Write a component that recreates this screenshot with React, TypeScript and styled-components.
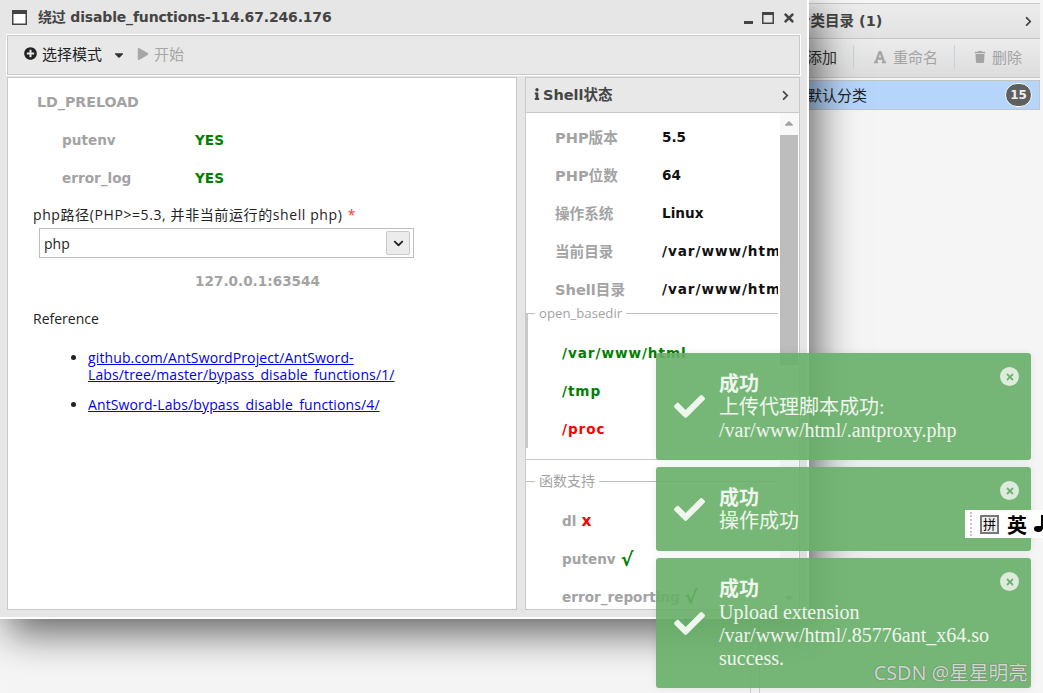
import * as React from 'react'
import styled, { createGlobalStyle } from 'styled-components'
import {
  FaCaretDown,
  FaCheck,
  FaChevronDown,
  FaChevronRight,
  FaFont,
  FaInfo,
  FaPlay,
  FaPlusCircle,
  FaTimes,
  FaTrash,
} from 'react-icons/fa'

const Global = createGlobalStyle`
  html, body { margin: 0; padding: 0; height: 100%; }
  body {
    background: #f5f5f5;
    overflow: hidden;
    font-family: "Open Sans", "Noto Sans CJK SC", sans-serif;
    font-size: 14px;
    color: #222;
  }
`

const boldFont = `"DejaVu Sans", "Noto Sans CJK SC", sans-serif`
const serifFont = `"Liberation Serif", "Noto Sans CJK SC", serif`

const Desktop = styled.div`
  position: relative;
  width: 1043px;
  height: 693px;
  overflow: hidden;
  display: flex;
  gap: 8px;
`
const BackLeft = styled.div`
  width: 750px;
  flex: none;
  border-right: 1px solid #cfcfcf;
`
const BackPanel = styled.div`
  flex: 1;
  margin-top: 3px;
  margin-right: 3px;
  border-left: 1px solid #cfcfcf;
  display: flex;
  flex-direction: column;
  font-size: 15px;
`
const BackHeader = styled.div`
  height: 36px;
  box-sizing: border-box;
  display: flex;
  align-items: center;
  justify-content: space-between;
  padding: 0 6px 0 36px;
  background: linear-gradient(#ececec, #e2e2e2);
  border-top: 1px solid #c8c8c8;
  border-bottom: 1px solid #c8c8c8;
  font: bold 14.5px ${boldFont};
  color: #444;
`
const BackHeaderText = styled.span`
  padding-bottom: 3px;
`
const BackToolbar = styled.div`
  height: 39px;
  box-sizing: border-box;
  display: flex;
  align-items: center;
  padding: 0 0 3px 28px;
  background: linear-gradient(#ececec, #dcdcdc);
  border-bottom: 1px solid #c8c8c8;
`
const BackTool = styled.div<{ $muted?: boolean }>`
  display: flex;
  align-items: center;
  gap: 6px;
  height: 24px;
  padding: 0 16px 0 19px;
  line-height: 20px;
  white-space: nowrap;
  color: ${(p) => (p.$muted ? '#a3a3a3' : '#333')};
  border-right: 1px solid #c5d3dc;
  &:first-child {
    padding-left: 0;
  }
  &:last-child {
    border-right: none;
  }
`
const CategoryRow = styled.div`
  height: 30px;
  box-sizing: border-box;
  margin-top: 2px;
  display: flex;
  align-items: center;
  justify-content: space-between;
  padding: 0 7px 0 46px;
  background: #b5d5fb;
  border: 1px solid #c4c4c4;
  color: #222;
`
const CategoryName = styled.span`
  padding-bottom: 2px;
`
const Badge = styled.span`
  width: 27px;
  height: 24px;
  box-sizing: border-box;
  border-radius: 12px;
  background: #5f5f5f;
  border: 1px solid #fff;
  color: #eee;
  font: bold 12px ${boldFont};
  display: flex;
  align-items: center;
  justify-content: center;
`

const Win = styled.div`
  position: absolute;
  left: 0;
  top: 0;
  width: 809px;
  height: 619px;
  box-sizing: border-box;
  background: #e6e6e6;
  border: solid #fff;
  border-width: 0 2px 2px 0;
  box-shadow: 8px 14px 38px rgba(0, 0, 0, 0.6);
  display: flex;
  flex-direction: column;
  padding: 0 7px 7px 7px;
`
const TitleBar = styled.div`
  height: 35px;
  flex: none;
  margin-left: -1px;
  display: flex;
  align-items: center;
  gap: 11px;
  padding: 0 4px 0 6px;
  box-sizing: border-box;
  font: bold 14px ${boldFont};
  color: #444;
`
const TitleText = styled.span`
  flex: 1;
  padding-bottom: 4px;
  letter-spacing: -0.17px;
`
const WinControls = styled.div`
  display: flex;
  align-items: center;
  gap: 8px;
  color: #444;
`
const Toolbar = styled.div`
  height: 40px;
  box-sizing: border-box;
  flex: none;
  display: flex;
  align-items: center;
  padding: 0 0 3px 16px;
  background: #e8e8e8;
  border: 1px solid #c9c9c9;
  box-shadow: 0 0 0 1px #fff;
  font-size: 15px;
`
const ToolButton = styled.div<{ $off?: boolean }>`
  display: flex;
  align-items: center;
  gap: 5px;
  color: ${(p) => (p.$off ? '#a6a6a6' : '#222')};
`
const CaretSlot = styled.div`
  display: flex;
  margin: 3px 11px 0 10px;
  color: #333;
`
const Panes = styled.div`
  flex: 1;
  min-height: 0;
  margin-top: 2px;
  display: flex;
  gap: 8px;
`
const LeftPane = styled.div`
  width: 510px;
  flex: none;
  background: #fff;
  border: 1px solid #c9c9c9;
  padding: 5px 0 0 25px;
  box-sizing: border-box;
`
const RightPane = styled.div`
  flex: 1;
  min-width: 0;
  display: flex;
  flex-direction: column;
`
const PaneHeader = styled.div`
  height: 36px;
  box-sizing: border-box;
  flex: none;
  display: flex;
  align-items: center;
  justify-content: space-between;
  padding: 0 8px 0 5px;
  background: #e8e8e8;
  border: 1px solid #c9c9c9;
  font: bold 14.5px ${boldFont};
  color: #444;
`
const PaneTitle = styled.span`
  display: flex;
  align-items: center;
  padding-bottom: 3px;
`
const PaneBody = styled.div`
  flex: 1;
  min-height: 0;
  display: flex;
  background: #fff;
  border-left: 1px solid #c9c9c9;
  border-right: 1px solid #c9c9c9;
  border-bottom: 1px solid #c9c9c9;
`
const ScrollArea = styled.div`
  flex: 1;
  min-width: 0;
  overflow: hidden;
  padding-top: 5px;
`
const ScrollBar = styled.div`
  width: 18px;
  flex: none;
  margin: 0 1px 0 2px;
  display: flex;
  flex-direction: column;
  align-items: center;
  background: #f8f8f8;
  position: relative;
  color: #a3a3a3;
`
const ScrollEnd = styled.div`
  height: 22px;
  display: flex;
  align-items: center;
  justify-content: center;
`
const ScrollEndBottom = styled(ScrollEnd)`
  position: absolute;
  bottom: 0;
  left: 0;
  right: 0;
`
const Thumb = styled.div`
  width: 100%;
  height: 230px;
  background: #bdbdbd;
`
const FormHeading = styled.div`
  height: 38px;
  display: flex;
  align-items: center;
  padding-left: 4px;
  font: bold 14.2px ${boldFont};
  color: #a3a3a3;
`
const KV = styled.div<{ $indent: number }>`
  height: 38px;
  display: flex;
  align-items: center;
  padding-left: ${(p) => p.$indent}px;
  white-space: nowrap;
  font: bold 13.6px ${boldFont};
`
const Label = styled.span<{ $w: number }>`
  width: ${(p) => p.$w}px;
  flex: none;
  color: #a3a3a3;
`
const ShellLabel = styled(Label)`
  font-size: 14.6px;
  position: relative;
  top: -1px;
`
const Value = styled.span<{ $color?: string; $path?: boolean }>`
  color: ${(p) => p.$color || '#111'};
  letter-spacing: ${(p) => (p.$path ? '0.95px' : '0')};
`
const Mark = styled.span<{ $color: string; $size: number }>`
  color: ${(p) => p.$color};
  font-size: ${(p) => p.$size}px;
  margin-left: 5px;
`
const FieldLabel = styled.div`
  margin-top: 8px;
  line-height: 20px;
  color: #222;
  white-space: nowrap;
  letter-spacing: 0.6px;
`
const Req = styled.span`
  color: #f33;
  margin-left: 1px;
`
const Select = styled.div`
  width: 375px;
  height: 30px;
  margin: 3px 0 0 6px;
  box-sizing: border-box;
  border: 1px solid #bdbdbd;
  display: flex;
  align-items: center;
  justify-content: space-between;
  padding: 0 3px 0 4px;
  background: #fff;
`
const SelectBtn = styled.div`
  width: 24px;
  height: 24px;
  box-sizing: border-box;
  border: 1px solid #c9c9c9;
  border-radius: 2px;
  background: #ececec;
  color: #222;
  display: flex;
  align-items: center;
  justify-content: center;
`
const Centered = styled.div`
  height: 38px;
  margin-top: 4px;
  padding-left: 162px;
  display: flex;
  align-items: center;
  font: bold 13.6px ${boldFont};
  color: #a3a3a3;
`
const RefTitle = styled.div`
  margin-top: 9px;
  line-height: 20px;
`
const RefList = styled.ul`
  margin: 20px 0 0;
  padding-left: 55px;
  line-height: 17px;
  letter-spacing: 0.12px;
  li {
    margin-bottom: 13px;
    width: 330px;
  }
  a {
    color: #00e;
    text-decoration: underline;
  }
`
const Field = styled.fieldset`
  margin: -4px 0 0;
  padding: 12px 0 0;
  border: none;
  border-top: 1px solid #bdbdbd;
  border-left: 2px solid #c9c9c9;
`
const Legend = styled.legend`
  margin-left: 7px;
  padding: 0 4px;
  color: #a3a3a3;
  font-size: 13.2px;
  line-height: 18px;
`
const FuncField = styled(Field)`
  margin-top: 12px;
  border-left: none;
`
const FuncLegend = styled(Legend)`
  margin-left: 9px;
  font-size: 14px;
`
const FieldTop = styled.div`
  border-bottom: 1px solid #c9c9c9;
  padding-bottom: 11px;
`

const Toasts = styled.div`
  position: absolute;
  left: 656px;
  top: 353px;
  width: 375px;
  display: flex;
  flex-direction: column;
  gap: 7px;
`
const Toast = styled.div`
  position: relative;
  box-sizing: border-box;
  padding: 20px 40px 18px 63px;
  border-radius: 3px;
  background: rgba(103, 174, 103, 0.9);
  box-shadow: 0 0 8px rgba(0, 0, 0, 0.08);
  color: #eef6ee;
  font: 20px/23px ${serifFont};
`
const ToastCheck = styled.div`
  position: absolute;
  left: 18px;
  top: 0;
  bottom: 0;
  display: flex;
  align-items: center;
  color: #eef6ee;
`
const ToastTitle = styled.div`
  font-weight: bold;
`
const ToastClose = styled.div`
  position: absolute;
  right: 12px;
  top: 14px;
  width: 19px;
  height: 19px;
  border-radius: 50%;
  background: #dcebdc;
  color: #6cae6c;
  display: flex;
  align-items: center;
  justify-content: center;
`
const Ime = styled.div`
  position: absolute;
  left: 965px;
  top: 510px;
  width: 78px;
  height: 28px;
  background: #fff;
  display: flex;
  align-items: center;
  padding-left: 5px;
  box-sizing: border-box;
  overflow: hidden;
  color: #000;
`
const ImeGrip = styled.span`
  width: 0;
  height: 24px;
  border-left: 2px dotted #c4c4c4;
  margin-right: 8px;
  flex: none;
`
const ImeBox = styled.span`
  width: 19px;
  height: 19px;
  box-sizing: border-box;
  border: 2px solid #777;
  background: #eee;
  font-size: 13px;
  line-height: 15px;
  text-align: center;
  flex: none;
  margin-right: 8px;
`
const ImeBig = styled.span`
  font: bold 20px "Noto Sans CJK SC", sans-serif;
  flex: none;
  margin-right: 5px;
`
const Watermark = styled.div`
  position: absolute;
  right: 15px;
  bottom: 7px;
  font: 19.7px "Noto Sans", "Noto Sans CJK SC", sans-serif;
  color: rgba(238, 238, 238, 0.85);
  text-shadow: 0 0 1px rgba(50, 50, 50, 0.8);
`

const shellRows: [string, string, boolean][] = [
  ['PHP版本', '5.5', false],
  ['PHP位数', '64', false],
  ['操作系统', 'Linux', false],
  ['当前目录', '/var/www/html', true],
  ['Shell目录', '/var/www/html', true],
]
const baseDirs = [
  { path: '/var/www/html', color: '#008000' },
  { path: '/tmp', color: '#008000' },
  { path: '/proc', color: '#f00' },
]
const funcs = [
  { name: 'dl', mark: 'x', color: '#f00', size: 15.5 },
  { name: 'putenv', mark: '√', color: '#008000', size: 19 },
  { name: 'error_reporting', mark: '√', color: '#008000', size: 19 },
]

const WindowIcon = () => (
  <svg width="15" height="15" viewBox="0 0 15 15">
    <rect x="0.75" y="0.75" width="13.5" height="13.5" fill="#fff" stroke="#444" strokeWidth="1.5" />
    <rect x="0" y="0" width="15" height="4" fill="#444" />
  </svg>
)
const MinIcon = () => (
  <svg width="10" height="12" viewBox="0 0 10 12">
    <rect x="0" y="9" width="9" height="3" fill="#444" />
  </svg>
)
const MaxIcon = () => (
  <svg width="12" height="12" viewBox="0 0 12 12">
    <rect x="0.75" y="0.75" width="10.5" height="10.5" fill="none" stroke="#444" strokeWidth="1.5" />
    <rect x="0" y="0" width="12" height="3" fill="#444" />
  </svg>
)

const ImeMoon = () => (
  <svg width="20" height="20" viewBox="0 0 20 20" style={{ flex: 'none' }}>
    <path d="M9 1 L11 1 L11 14 C11 18 6 19 3 17 C1 15 2 12 5 12 L9 12 Z" fill="#000" />
  </svg>
)

const ToastBase = ({ children }: { children: React.ReactNode }) => (
  <Toast>
    <ToastCheck>
      <FaCheck size={31} />
    </ToastCheck>
    <ToastClose>
      <FaTimes size={10} />
    </ToastClose>
    <ToastTitle>成功</ToastTitle>
    {children}
  </Toast>
)

const App = () => {
  return (
    <Desktop>
      <Global />
      <BackLeft />
      <BackPanel>
        <BackHeader>
          <BackHeaderText>分类目录 (1)</BackHeaderText>
          <FaChevronRight size={11} />
        </BackHeader>
        <BackToolbar>
          <BackTool>
            <FaPlusCircle size={13} />
            添加
          </BackTool>
          <BackTool $muted>
            <FaFont size={14} />
            重命名
          </BackTool>
          <BackTool $muted>
            <FaTrash size={12} />
            删除
          </BackTool>
        </BackToolbar>
        <CategoryRow>
          <CategoryName>默认分类</CategoryName>
          <Badge>15</Badge>
        </CategoryRow>
      </BackPanel>

      <Win>
        <TitleBar>
          <WindowIcon />
          <TitleText>绕过 disable_functions-114.67.246.176</TitleText>
          <WinControls>
            <MinIcon />
            <MaxIcon />
            <FaTimes size={14} />
          </WinControls>
        </TitleBar>
        <Toolbar>
          <ToolButton>
            <FaPlusCircle size={13} />
            选择模式
          </ToolButton>
          <CaretSlot>
            <FaCaretDown size={14} />
          </CaretSlot>
          <ToolButton $off>
            <FaPlay size={12} />
            开始
          </ToolButton>
        </Toolbar>
        <Panes>
          <LeftPane>
            <FormHeading>LD_PRELOAD</FormHeading>
            <KV $indent={29}>
              <Label $w={133}>putenv</Label>
              <Value $color="#008000">YES</Value>
            </KV>
            <KV $indent={29}>
              <Label $w={133}>error_log</Label>
              <Value $color="#008000">YES</Value>
            </KV>
            <FieldLabel>
              php路径(PHP&gt;=5.3, 并非当前运行的shell php) <Req>*</Req>
            </FieldLabel>
            <Select>
              php
              <SelectBtn>
                <FaChevronDown size={11} />
              </SelectBtn>
            </Select>
            <Centered>127.0.0.1:63544</Centered>
            <RefTitle>Reference</RefTitle>
            <RefList>
              <li>
                <a href="#a">github.com/AntSwordProject/AntSword-Labs/tree/master/bypass_disable_functions/1/</a>
              </li>
              <li>
                <a href="#b">AntSword-Labs/bypass_disable_functions/4/</a>
              </li>
            </RefList>
          </LeftPane>
          <RightPane>
            <PaneHeader>
              <PaneTitle>
                <FaInfo size={12} />
                Shell状态
              </PaneTitle>
              <FaChevronRight size={11} />
            </PaneHeader>
            <PaneBody>
              <ScrollArea>
                {shellRows.map(([label, value, isPath]) => (
                  <KV key={label} $indent={29}>
                    <ShellLabel $w={107}>{label}</ShellLabel>
                    <Value $path={isPath}>{value}</Value>
                  </KV>
                ))}
                <FieldTop>
                  <Field>
                    <Legend>open_basedir</Legend>
                    {baseDirs.map((d) => (
                      <KV key={d.path} $indent={34}>
                        <Value $color={d.color} $path>
                          {d.path}
                        </Value>
                      </KV>
                    ))}
                  </Field>
                </FieldTop>
                <FuncField>
                  <FuncLegend>函数支持</FuncLegend>
                  {funcs.map((f) => (
                    <KV key={f.name} $indent={36}>
                      <Value $color="#a3a3a3">{f.name}</Value>
                      <Mark $color={f.color} $size={f.size}>
                        {f.mark}
                      </Mark>
                    </KV>
                  ))}
                </FuncField>
              </ScrollArea>
              <ScrollBar>
                <ScrollEnd>
                  <FaCaretDown size={14} style={{ transform: 'rotate(180deg)' }} />
                </ScrollEnd>
                <Thumb />
                <ScrollEndBottom>
                  <FaCaretDown size={14} />
                </ScrollEndBottom>
              </ScrollBar>
            </PaneBody>
          </RightPane>
        </Panes>
      </Win>

      <Toasts>
        <ToastBase>
          上传代理脚本成功:
          <br />
          /var/www/html/.antproxy.php
        </ToastBase>
        <ToastBase>操作成功</ToastBase>
        <ToastBase>
          Upload extension
          <br />
          /var/www/html/.85776ant_x64.so
          <br />
          success.
        </ToastBase>
      </Toasts>

      <Ime>
        <ImeGrip />
        <ImeBox>拼</ImeBox>
        <ImeBig>英</ImeBig>
        <ImeMoon />
      </Ime>
      <Watermark>CSDN @星星明亮</Watermark>
    </Desktop>
  )
}

export default App
